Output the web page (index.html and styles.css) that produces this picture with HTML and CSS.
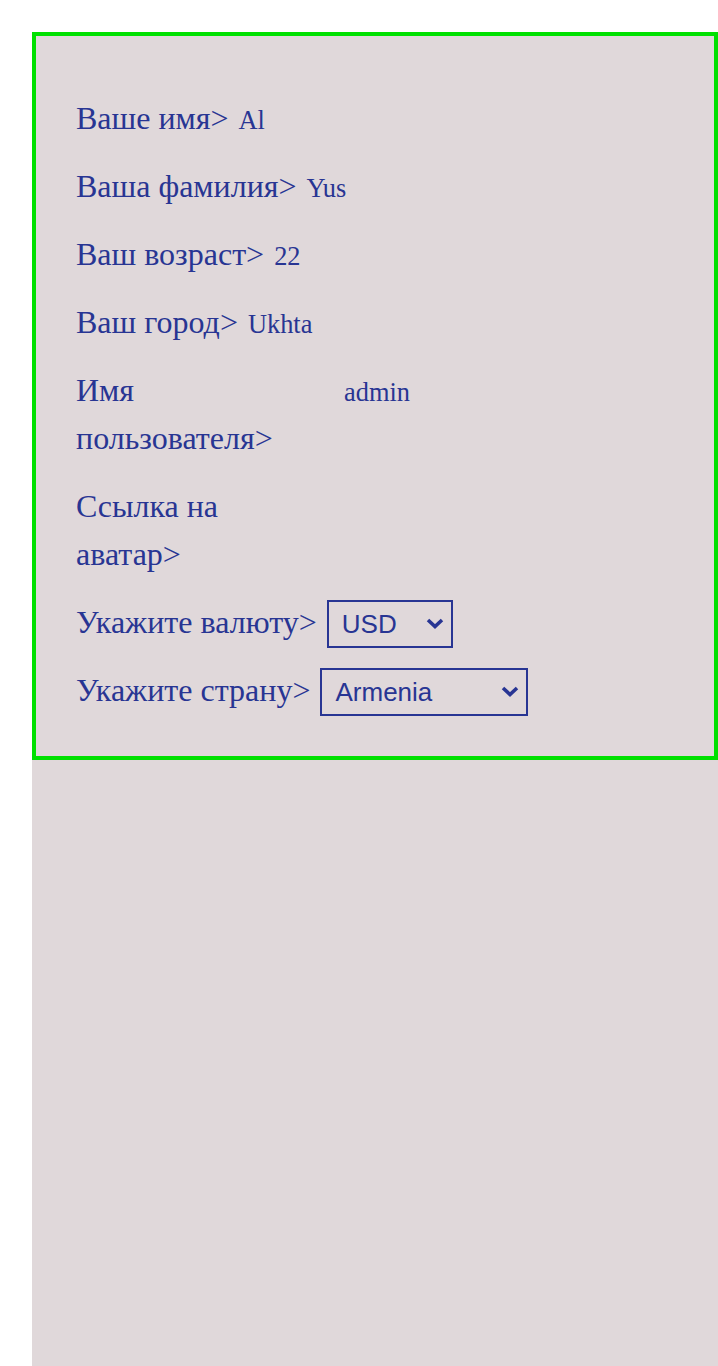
FILE: index.html
```html
<!DOCTYPE html>
<html lang="ru">
<head>
<meta charset="utf-8">
<title>Профиль</title>
<link rel="stylesheet" href="styles.css">
</head>
<body>
<main class="panel">
  <section class="card">
    <div class="row"><span class="label">Ваше имя&gt;</span><span class="value">Al</span></div>
    <div class="row"><span class="label">Ваша фамилия&gt;</span><span class="value">Yus</span></div>
    <div class="row"><span class="label">Ваш возраст&gt;</span><span class="value">22</span></div>
    <div class="row"><span class="label">Ваш город&gt;</span><span class="value">Ukhta</span></div>
    <div class="row"><span class="label label-user">Имя пользователя&gt;</span><span class="value">admin</span></div>
    <div class="row"><span class="label label-avatar">Ссылка на аватар&gt;</span><span class="value"></span></div>
    <div class="row"><span class="label">Укажите валюту&gt;</span>
      <span class="select-wrap">
        <select class="select select-currency">
          <option>USD</option><option>EUR</option><option>RUB</option>
        </select>
        <svg class="chevron" viewBox="0 0 18 11" width="18" height="11" aria-hidden="true"><polyline points="2,2 9,8.5 16,2" fill="none" stroke="#283593" stroke-width="3.6" stroke-linejoin="miter"/></svg>
      </span>
    </div>
    <div class="row"><span class="label">Укажите страну&gt;</span>
      <span class="select-wrap">
        <select class="select select-country">
          <option>Armenia</option><option>Russia</option><option>Belarus</option>
        </select>
        <svg class="chevron" viewBox="0 0 18 11" width="18" height="11" aria-hidden="true"><polyline points="2,2 9,8.5 16,2" fill="none" stroke="#283593" stroke-width="3.6" stroke-linejoin="miter"/></svg>
      </span>
    </div>
  </section>
</main>
</body>
</html>
```
FILE: styles.css
```css
html, body {
  margin: 0;
  padding: 0;
  background: #ffffff;
}
body {
  padding: 32px 0 0 32px;
  min-height: 1366px;
  box-sizing: border-box;
  display: flex;
}
.panel {
  flex: 1;
  background: #e0d8da;
  min-height: 1334px;
}
.card {
  border: 4px solid #00e000;
  padding: 60px 40px 40px 40px;
  display: flex;
  flex-direction: column;
  gap: 20px;
  color: #283593;
  font-family: "Liberation Serif", "Times New Roman", serif;
}
.row {
  display: flex;
  align-items: flex-start;
}
.label {
  font-size: 32px;
  line-height: 48px;
  margin: -2px 0 2px 0;
}
.label-user {
  width: 258px;
}
.label-avatar {
  width: 190px;
}
.value {
  font-size: 26.4px;
  line-height: 44px;
  margin: 2px 0 0 10px;
}
.select-wrap {
  position: relative;
  display: block;
  margin-left: 10px;
}
.select {
  display: block;
  height: 48px;
  box-sizing: border-box;
  border: 2px solid #283593;
  border-radius: 0;
  background: transparent;
  color: #283593;
  font-family: "Liberation Sans", Arial, sans-serif;
  font-size: 26px;
  padding: 0 30px 0 13px;
  -webkit-appearance: none;
  appearance: none;
  outline: none;
}
.chevron {
  position: absolute;
  right: 9px;
  top: 18px;
  pointer-events: none;
}
.select-currency {
  width: 126px;
}
.select-country {
  width: 208px;
}
```
